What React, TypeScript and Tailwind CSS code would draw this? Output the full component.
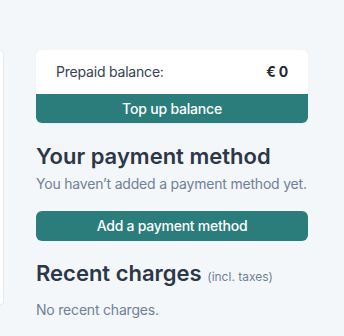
import React from "react";

export default function App() {
  return (
    <div
      className="w-[344px] h-[336px] bg-[#f3f7fa] flex overflow-hidden"
      style={{ fontFamily: "Inter, 'Noto Sans', sans-serif" }}
    >
      <div className="mt-[50px] w-[4px] h-[255px] bg-white rounded-r-md border-y border-r border-[#e6ebf0] shrink-0" />
      <div className="ml-[32px] mt-[50px] w-[272px] flex flex-col">
        <div className="bg-white rounded-md shadow-[0_1px_2px_rgba(0,0,0,0.06)] overflow-hidden">
          <div className="h-[44px] px-5 flex items-center justify-between text-[14px] leading-[20px] tracking-[-0.2px] text-[#374151]">
            <span>Prepaid balance:</span>
            <span className="font-bold text-[#1f2937]">€ 0</span>
          </div>
          <button className="w-full h-[29px] bg-[#2a7d7b] text-white text-[14px] leading-[20px] tracking-[-0.2px] font-medium flex items-center justify-center">
            Top up balance
          </button>
        </div>
        <h2 className="mt-[17px] text-[22px] leading-[32px] font-semibold text-[#2d3748]">
          Your payment method
        </h2>
        <p className="mt-[2px] text-[14px] leading-[20px] tracking-[-0.2px] text-[#718096]">
          You haven’t added a payment method yet.
        </p>
        <button className="mt-[17px] w-full h-[30px] rounded-md bg-[#2a7d7b] text-white text-[14px] leading-[20px] tracking-[-0.25px] font-medium flex items-center justify-center">
          Add a payment method
        </button>
        <h2 className="mt-4 text-[22px] leading-[32px] font-semibold text-[#2d3748] whitespace-nowrap">
          Recent charges{" "}
          <span className="text-[12px] font-normal text-[#718096]">(incl. taxes)</span>
        </h2>
        <p className="mt-[7px] text-[14px] leading-[20px] tracking-[-0.2px] text-[#718096]">
          No recent charges.
        </p>
      </div>
    </div>
  );
}
